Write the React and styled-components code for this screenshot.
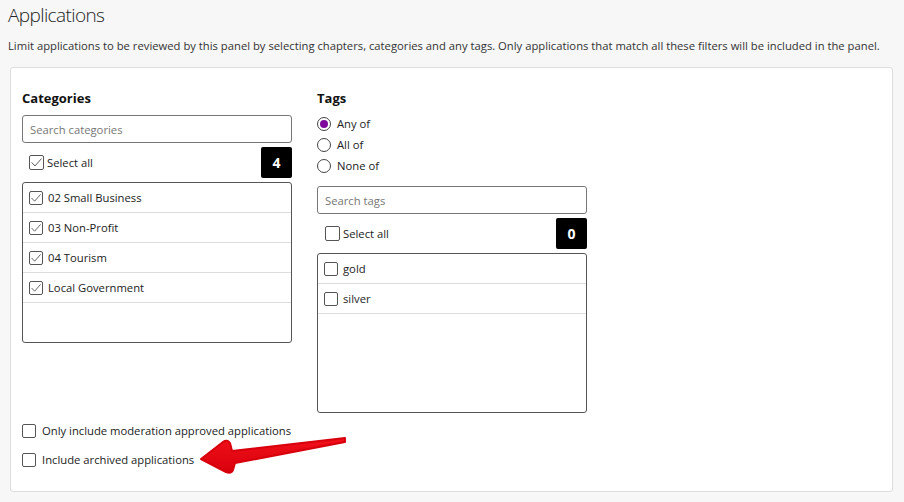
import React, { useState } from "react";
import styled, { createGlobalStyle } from "styled-components";

const GlobalStyle = createGlobalStyle`
  html, body {
    margin: 0;
    background: #f7f7f7;
    font-family: "Open Sans", "Liberation Sans", sans-serif;
    color: #222;
  }
`;

const categories = [
  { id: 1, label: "02 Small Business" },
  { id: 2, label: "03 Non-Profit" },
  { id: 3, label: "04 Tourism" },
  { id: 4, label: "Local Government" }
];

const tags = [
  { id: 1, label: "gold" },
  { id: 2, label: "silver" }
];

const Checkbox = ({ checked, size = 14 }) => (
  <Box size={size}>
    {checked && (
      <svg width={size - 2} height={size - 2} viewBox="0 0 12 12">
        <path d="M1.6 6 L4.6 9.2 L10.6 2.4" fill="none" stroke="#555" strokeWidth="0.9" />
      </svg>
    )}
  </Box>
);

const Radio = ({ label, selected }) => (
  <RadioRow>
    <RadioCircle>{selected && <RadioDot />}</RadioCircle>
    {label}
  </RadioRow>
);

const FilterList = ({ placeholder, items, checked, count, height, indent }) => (
  <>
    <Search placeholder={placeholder} />
    <SelectAllRow indent={indent}>
      <Checkbox checked={checked} size={15} />
      <span>Select all</span>
      <Badge>{count}</Badge>
    </SelectAllRow>
    <List height={height}>
      {items.map((item) => (
        <ListItem key={item.id}>
          <Checkbox checked={checked} />
          <span>{item.label}</span>
        </ListItem>
      ))}
    </List>
  </>
);

const App = () => {
  const [match] = useState("any");

  return (
    <Page>
      <GlobalStyle />
      <Title>Applications</Title>
      <Intro>
        Limit applications to be reviewed by this panel by selecting chapters, categories and any tags. Only
        applications that match all these filters will be included in the panel.
      </Intro>
      <Panel>
        <Columns>
          <Column>
            <Heading>Categories</Heading>
            <FilterList
              placeholder="Search categories"
              items={categories}
              checked
              count={4}
              height={161}
              indent={7}
            />
          </Column>
          <Column>
            <Heading>Tags</Heading>
            <RadioGroup>
              <Radio label="Any of" selected={match === "any"} />
              <Radio label="All of" selected={match === "all"} />
              <Radio label="None of" selected={match === "none"} />
            </RadioGroup>
            <FilterList
              placeholder="Search tags"
              items={tags}
              checked={false}
              count={0}
              height={160}
              indent={8}
            />
          </Column>
        </Columns>
        <Options>
          <OptionRow>
            <Checkbox />
            <span>Only include moderation approved applications</span>
          </OptionRow>
          <OptionRow>
            <Checkbox />
            <span>Include archived applications</span>
          </OptionRow>
        </Options>
        <Arrow width="160" height="40" viewBox="0 0 160 40">
          <defs>
            <linearGradient id="arrowFill" x1="0" y1="0" x2="0" y2="1">
              <stop offset="0" stopColor="#f0101a" />
              <stop offset="1" stopColor="#d8000c" />
            </linearGradient>
          </defs>
          <path
            d="M4 23 L26 6 Q30 3 33 7 L35 15 L148 2 L148 6 L38 27 L36 34 Q34 38 29 36 Z"
            fill="url(#arrowFill)"
            stroke="#d8000c"
            strokeWidth="2"
            strokeLinejoin="round"
          />
        </Arrow>
      </Panel>
    </Page>
  );
};

export default App;

const Page = styled.div`
  padding: 3px 11px 0 8px;
`;

const Title = styled.h1`
  margin: 0;
  font-size: 19px;
  line-height: 24px;
  font-weight: 300;
  letter-spacing: -0.6px;
  color: #222;
`;

const Intro = styled.p`
  margin: 10px 0 0;
  font-size: 11.25px;
  line-height: 18px;
  color: #333;
  white-space: nowrap;
`;

const Panel = styled.div`
  position: relative;
  margin: 12px 0 0 2px;
  height: 425px;
  box-sizing: border-box;
  background: #fff;
  border: 1px solid #ddd;
  border-radius: 3px;
  padding: 20px 11px 0;
`;

const Columns = styled.div`
  display: flex;
  align-items: flex-start;
  gap: 25px;
`;

const Column = styled.div`
  width: 270px;
  display: flex;
  flex-direction: column;
`;

const Heading = styled.h2`
  margin: 0 0 7px;
  font-size: 13px;
  line-height: 20px;
  font-weight: 700;
  color: #111;
`;

const Search = styled.input`
  box-sizing: border-box;
  width: 100%;
  height: 28px;
  border: 1px solid #777;
  border-radius: 3px;
  padding: 0 7px;
  font-family: inherit;
  font-size: 11.25px;
  outline: none;
  &::placeholder {
    color: #777;
  }
`;

const SelectAllRow = styled.div`
  display: flex;
  align-items: center;
  gap: 3px;
  margin-top: 4px;
  padding-left: ${(p) => p.indent}px;
  font-size: 11.25px;
  color: #222;
`;

const Badge = styled.div`
  margin-left: auto;
  width: 31px;
  height: 31px;
  display: flex;
  align-items: center;
  justify-content: center;
  background: #000;
  color: #fff;
  border-radius: 2px;
  font-size: 14px;
  font-weight: 700;
`;

const List = styled.div`
  box-sizing: border-box;
  margin-top: 4px;
  height: ${(p) => p.height}px;
  border: 1px solid #555;
  border-radius: 3px;
  background: #fff;
`;

const ListItem = styled.div`
  box-sizing: border-box;
  display: flex;
  align-items: center;
  gap: 5px;
  height: 30px;
  padding-left: 6px;
  border-bottom: 1px solid #ddd;
  font-size: 11.25px;
  color: #222;
`;

const Box = styled.span`
  box-sizing: border-box;
  flex: none;
  width: ${(p) => p.size}px;
  height: ${(p) => p.size}px;
  display: inline-flex;
  align-items: center;
  justify-content: center;
  border: 1px solid #555;
  border-radius: 2px;
  background: #fff;
`;

const RadioGroup = styled.div`
  display: flex;
  flex-direction: column;
  margin: -2px 0 10px;
`;

const RadioRow = styled.label`
  display: flex;
  align-items: center;
  gap: 6px;
  height: 21px;
  font-size: 11.25px;
  color: #222;
`;

const RadioCircle = styled.span`
  box-sizing: border-box;
  width: 14px;
  height: 14px;
  border: 1px solid #444;
  border-radius: 50%;
  display: inline-flex;
  align-items: center;
  justify-content: center;
`;

const RadioDot = styled.span`
  width: 8px;
  height: 8px;
  border-radius: 50%;
  background: #7d0a9c;
`;

const Options = styled.div`
  margin-top: 3px;
  display: flex;
  flex-direction: column;
`;

const OptionRow = styled.label`
  display: flex;
  align-items: center;
  gap: 6px;
  height: 29px;
  font-size: 11.25px;
  color: #222;
`;

const Arrow = styled.svg`
  position: absolute;
  left: 186px;
  top: 368px;
`;
